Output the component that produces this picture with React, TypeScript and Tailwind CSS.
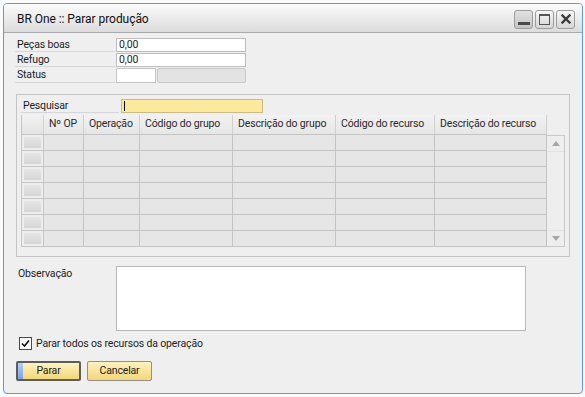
import React from "react";

const cols = [
  { w: "w-[40px]", t: "Nº OP" },
  { w: "w-[56px]", t: "Operação" },
  { w: "w-[93px]", t: "Código do grupo" },
  { w: "w-[103px]", t: "Descrição do grupo" },
  { w: "w-[99px]", t: "Código do recurso" },
  { w: "w-[112px]", t: "Descrição do recurso" },
];

function FieldLabel({ text, w = "w-[100px]" }: { text: string; w?: string }) {
  return (
    <div className={`${w} h-[14px] border-b border-[#d4d6da] pl-[2px] pt-[1px] flex items-center shrink-0`}>
      <span>{text}</span>
    </div>
  );
}

function TitleButton({ children, dim }: { children: React.ReactNode; dim?: boolean }) {
  return (
    <div
      className={`w-[19px] h-[19px] rounded-[3px] border border-[#9c9c9c] flex items-center justify-center ${
        dim ? "bg-gradient-to-b from-[#e2e2e2] to-[#c4c4c4]" : "bg-gradient-to-b from-[#f7f7f7] to-[#d6d6d6]"
      }`}
    >
      {children}
    </div>
  );
}

export default function App() {
  const rows = Array.from({ length: 7 });
  return (
    <div className="w-[585px] h-[397px] bg-[#fafafa] pl-[3px] pt-[3px] font-['Roboto',sans-serif] text-[10.5px] tracking-[-0.15px] leading-none text-[#1c1c1c]">
      <div className="w-[580px] h-[391px] border border-[#5b9be8] rounded-[4px] bg-[#efefef] flex flex-col overflow-hidden">
        {/* Title bar */}
        <div className="h-[29px] shrink-0 border-b border-[#a9a9a9] bg-gradient-to-b from-[#fbfbfb] to-[#dcdcdc] flex items-center pl-[13px] pr-[7px]">
          <span className="text-[12px] tracking-[-0.05px] text-[#111] pt-[1px]">BR One :: Parar produção</span>
          <div className="ml-auto flex gap-[2px] pt-[2px]">
            <TitleButton dim>
              <div className="w-[12px] h-[3px] bg-[#4a4a4a] mt-[9px]" />
            </TitleButton>
            <TitleButton>
              <div className="w-[11px] h-[11px] border border-[#555] border-t-[2px]" />
            </TitleButton>
            <TitleButton>
              <svg width="10" height="10" viewBox="0 0 10 10">
                <path d="M1.5 1.5 L8.5 8.5 M8.5 1.5 L1.5 8.5" stroke="#3c3c3c" strokeWidth="2.4" strokeLinecap="square" />
              </svg>
            </TitleButton>
          </div>
        </div>

        {/* Body */}
        <div className="flex-1 flex flex-col pl-[11px] pt-[5px]">
          {/* Fields */}
          <div className="flex flex-col gap-[1px]">
            <div className="flex">
              <FieldLabel text="Peças boas" />
              <div className="ml-[1px] w-[130px] h-[14px] border border-[#bcbcbc] bg-white pl-[2px] pt-[1px] flex items-center">0,00</div>
            </div>
            <div className="flex">
              <FieldLabel text="Refugo" />
              <div className="ml-[1px] w-[130px] h-[14px] border border-[#bcbcbc] bg-white pl-[2px] pt-[1px] flex items-center">0,00</div>
            </div>
            <div className="flex">
              <div className="w-[100px] h-[15px] border-b border-[#d4d6da] pl-[2px] pt-[1px] flex items-center shrink-0">Status</div>
              <div className="ml-[1px] w-[40px] h-[15px] border border-[#c4c4c4] bg-white" />
              <div className="ml-[1px] w-[89px] h-[15px] border border-[#c8c8c8] bg-[#e3e3e3] rounded-[2px]" />
            </div>
          </div>

          {/* Group box */}
          <div className="ml-[1px] mt-[11px] w-[554px] h-[163px] border border-[#c4c4c4] pl-[4px] pt-[4px] flex flex-col">
            <div className="flex">
              <FieldLabel text="Pesquisar" w="w-[98px]" />
              <div className="ml-[2px] w-[142px] h-[14px] border border-[#c9bc88] bg-[#fde99c] flex items-center pl-[2px]">
                <div className="w-[1px] h-[10px] bg-black" />
              </div>
            </div>

            {/* Table */}
            <div className="mt-[2px] flex">
              <div className="flex flex-col">
                {/* Header */}
                <div className="flex h-[20px] border-l border-b border-[#c4c4c4]">
                  <div className="w-[22px] h-full bg-gradient-to-b from-[#f2f2f2] to-[#e4e4e4] border-r border-[#d2d2d2]" />
                  {cols.map((c) => (
                    <div
                      key={c.t}
                      className={`${c.w} h-full bg-gradient-to-b from-[#f2f2f2] to-[#e6e6e6] border-r border-[#d0d0d0] pl-[5px] pt-[4px] text-[#2a2a2a] whitespace-nowrap overflow-hidden`}
                    >
                      {c.t}
                    </div>
                  ))}
                </div>
                {rows.map((_, i) => (
                  <div key={i} className="flex h-[16px] border-l border-b border-[#c4c4c4]">
                    <div className="w-[22px] h-full border-r border-[#c4c4c4] p-[1px]">
                      <div className="w-full h-full bg-gradient-to-b from-[#e6e6e6] to-[#d5d5d5] border border-[#ececec]" />
                    </div>
                    {cols.map((c) => (
                      <div key={c.t} className={`${c.w} h-full bg-[#e6e6e6] border-r border-[#c4c4c4]`} />
                    ))}
                  </div>
                ))}
              </div>
              {/* Scrollbar */}
              <div className="mt-[20px] w-[18px] h-[112px] border border-[#c8c8c8] border-l-0 bg-[#eeeeee] flex flex-col">
                <div className="h-[16px] border-b border-[#e2e2e2] flex items-center justify-center">
                  <svg width="8" height="5" viewBox="0 0 8 5">
                    <path d="M0 5 L4 0 L8 5 Z" fill="#a6a6a6" />
                  </svg>
                </div>
                <div className="flex-1" />
                <div className="h-[16px] border-t border-[#e2e2e2] flex items-center justify-center">
                  <svg width="8" height="5" viewBox="0 0 8 5">
                    <path d="M0 0 L8 0 L4 5 Z" fill="#a6a6a6" />
                  </svg>
                </div>
              </div>
            </div>
          </div>

          {/* Observação */}
          <div className="mt-[9px] flex">
            <div className="w-[101px] pl-[3px] pt-[3px]">Observação</div>
            <div className="w-[410px] h-[65px] border border-[#b8b8b8] bg-white" />
          </div>

          {/* Checkbox */}
          <div className="mt-[6px] ml-[4px] flex items-center">
            <div className="w-[13px] h-[13px] border border-[#4a4a4a] bg-gradient-to-br from-[#f4f4f4] to-white flex items-center justify-center">
              <svg width="9" height="9" viewBox="0 0 9 9">
                <path d="M1 4.5 L3.5 7 L8 1.5" stroke="#111" strokeWidth="1.6" fill="none" />
              </svg>
            </div>
            <span className="ml-[4px] pt-[1px]">Parar todos os recursos da operação</span>
          </div>

          {/* Buttons */}
          <div className="mt-[11px] ml-[1px] flex gap-[6px]">
            <div className="relative w-[65px] h-[20px] rounded-[2px] border-2 border-[#5c5c5c] bg-gradient-to-b from-[#fdf2bf] to-[#f4d774] flex items-center justify-center overflow-hidden">
              <div className="absolute left-0 top-0 bottom-0 w-[5px] bg-gradient-to-b from-[#b3cdf2] to-[#7ca3e0]" />
              <span className="relative">Parar</span>
            </div>
            <div className="w-[65px] h-[20px] rounded-[2px] border border-[#8e8e8e] bg-gradient-to-b from-[#fdf2bf] to-[#f4d774] flex items-center justify-center">
              Cancelar
            </div>
          </div>
        </div>
      </div>
    </div>
  );
}
